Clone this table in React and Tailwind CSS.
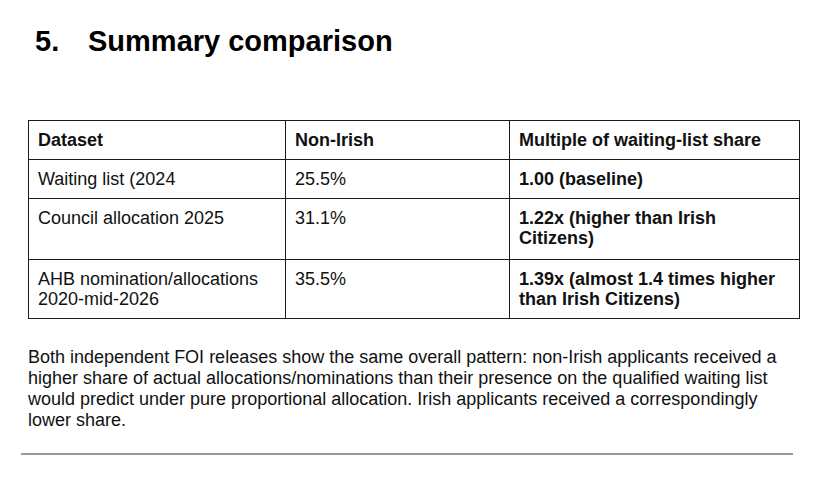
export default function App() {
  const cell = "border border-[#1a1a1a] px-[9px] pt-[9px] align-top text-left";
  const rows = [
    ["Waiting list (2024", "25.5%", "1.00 (baseline)", "pb-[9px]"],
    ["Council allocation 2025", "31.1%", "1.22x (higher than Irish Citizens)", "pb-[11px]"],
    ["AHB nomination/allocations 2020-mid-2026", "35.5%", "1.39x (almost 1.4 times higher than Irish Citizens)", "pb-[9px]"],
  ];
  return (
    <div className="w-[837px] h-[480px] bg-white text-black overflow-hidden" style={{ fontFamily: '"Liberation Sans", Arial, sans-serif' }}>
      <div className="pt-[25px] pl-[35px] flex text-[29px] leading-[32px] font-bold">
        <span className="w-[53px]">5.</span>
        <span>Summary comparison</span>
      </div>
      <div className="mt-[63px] ml-[28px]">
        <table className="border-collapse text-[18px] leading-[20px] text-[#111] table-fixed w-[771px]">
          <colgroup>
            <col className="w-[257px]" />
            <col className="w-[224px]" />
            <col className="w-[290px]" />
          </colgroup>
          <thead>
            <tr>
              <th className={cell + " pb-[9px] font-bold"}>Dataset</th>
              <th className={cell + " pb-[9px] font-bold"}>Non-Irish</th>
              <th className={cell + " pb-[9px] font-bold"}>Multiple of waiting-list share</th>
            </tr>
          </thead>
          <tbody>
            {rows.map((r, i) => (
              <tr key={i}>
                <td className={cell + " " + r[3]}>{r[0]}</td>
                <td className={cell + " " + r[3]}>{r[1]}</td>
                <td className={cell + " " + r[3] + " font-bold"}>{r[2]}</td>
              </tr>
            ))}
          </tbody>
        </table>
      </div>
      <p className="mt-[28px] ml-[28px] w-[770px] text-[18px] leading-[21px] text-[#111]">
        Both independent FOI releases show the same overall pattern: non-Irish applicants received a higher share of actual allocations/nominations than their presence on the qualified waiting list would predict under pure proportional allocation. Irish applicants received a correspondingly lower share.
      </p>
      <div className="mt-[22px] ml-[21px] w-[772px] h-[2px] bg-[#9a9a9a]" />
    </div>
  );
}
